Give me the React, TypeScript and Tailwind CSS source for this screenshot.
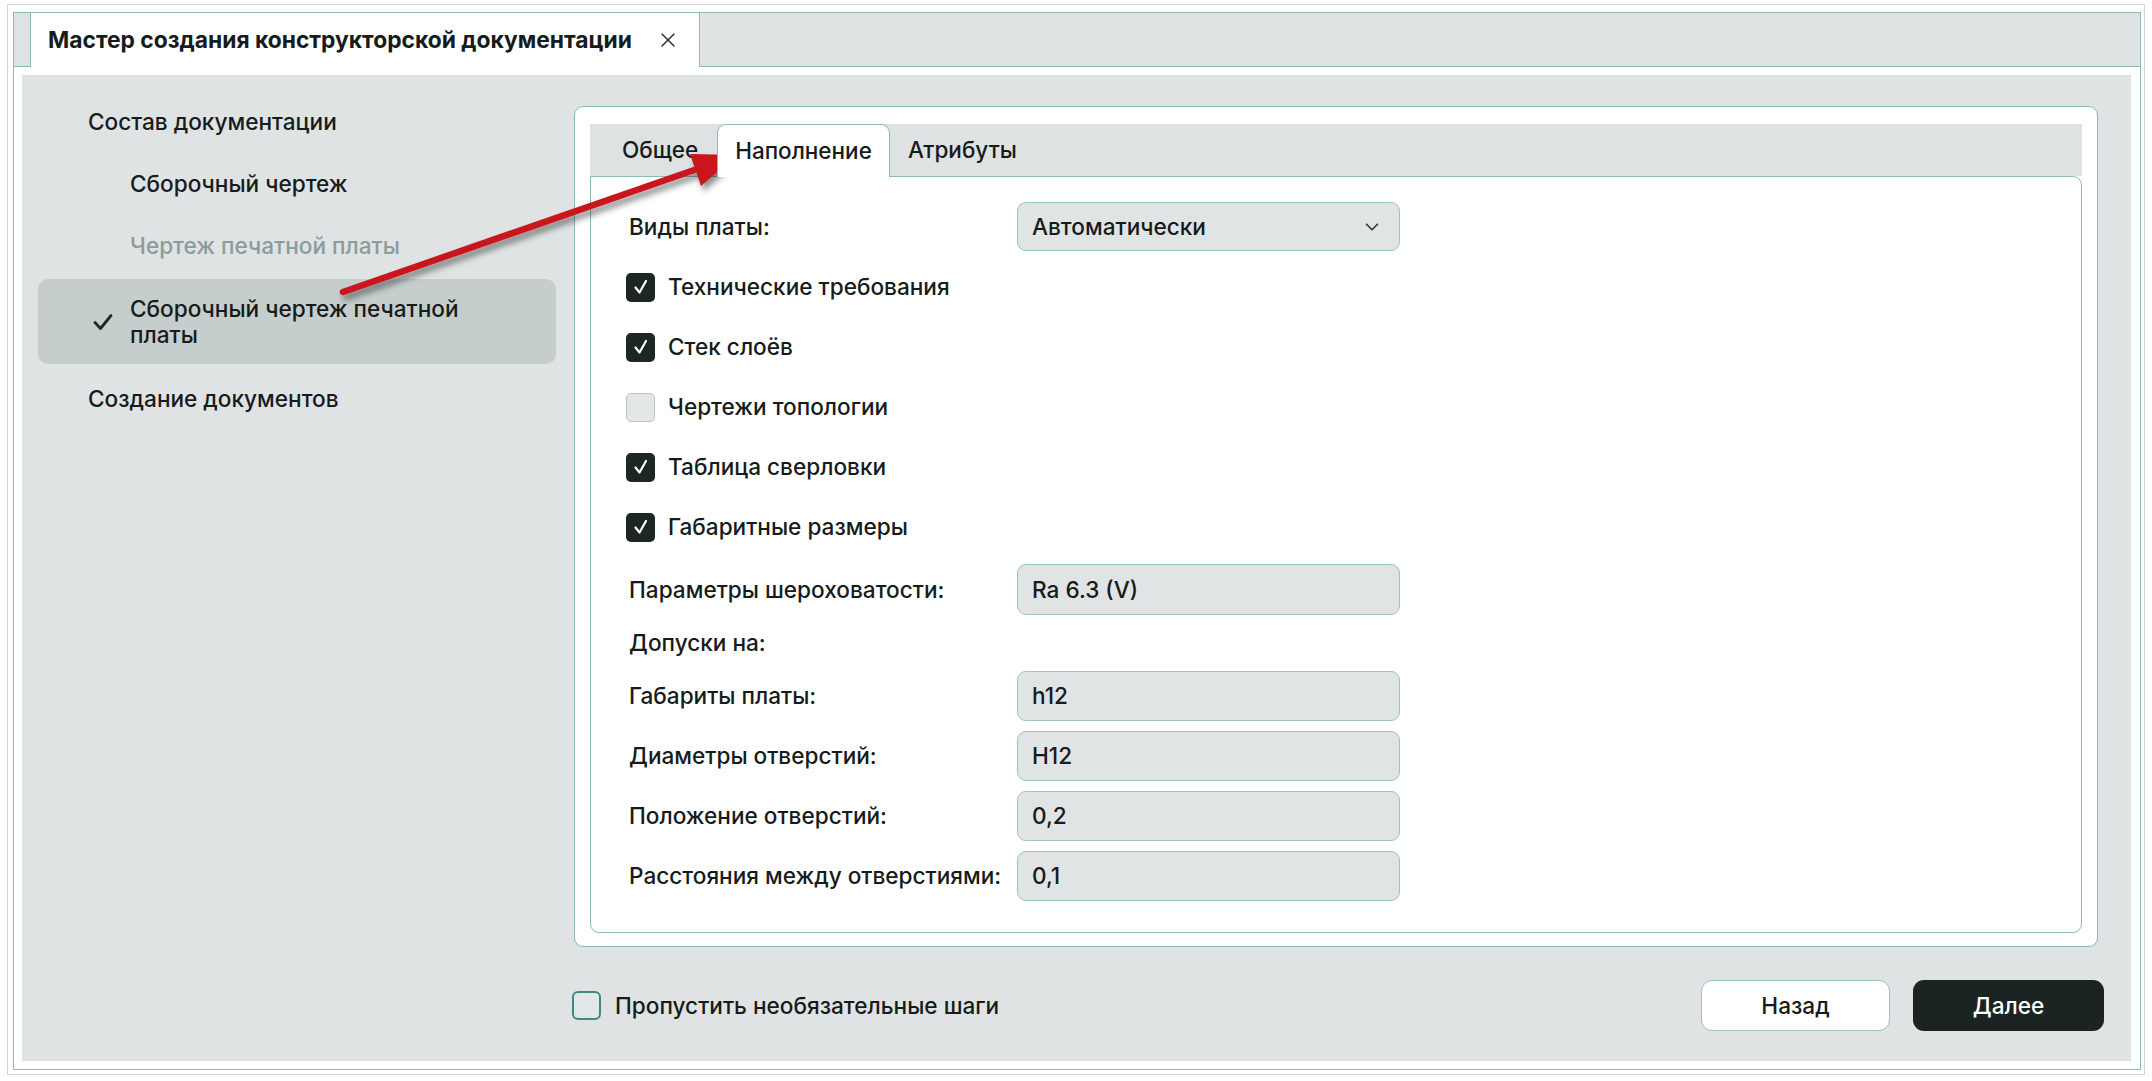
import React from "react";
import { X, ChevronDown } from "lucide-react";

function Check({ checked }: { checked: boolean }) {
  return checked ? (
    <div className="w-[29px] h-[29px] rounded-[5px] bg-[#1c2624] flex items-center justify-center shrink-0">
      <svg width="20" height="20" viewBox="0 0 20 20">
        <path d="M4.5 10.5 L8.5 15.5 L15 4" stroke="white" strokeWidth="2.2" fill="none" strokeLinecap="round" strokeLinejoin="round" />
      </svg>
    </div>
  ) : (
    <div className="w-[29px] h-[29px] rounded-[5px] bg-[#e4e7e7] border border-[#b9c5c4] shrink-0" />
  );
}

function CheckRow({ checked, label }: { checked: boolean; label: string }) {
  return (
    <div className="h-[60px] flex items-center ml-[-3px]">
      <Check checked={checked} />
      <span className="ml-[13px]">{label}</span>
    </div>
  );
}

function Field({ label, value }: { label: string; value: string }) {
  return (
    <div className="h-[50px] flex items-center">
      <div className="w-[388px]">{label}</div>
      <div className="w-[383px] h-full rounded-[9px] bg-[#e1e4e4] border-[1.5px] border-[#9cc3be] pl-[14px] flex items-center">
        {value}
      </div>
    </div>
  );
}

export default function App() {
  return (
    <div className="relative w-[2152px] h-[1081px] bg-white text-[#161b1b] [font-family:Inter,'Noto_Sans',sans-serif] overflow-hidden">
      {/* outer frame */}
      <div className="absolute left-[7px] top-[4px] w-[2138px] h-[1071px] border border-[#d2d5d5] pt-[7px] pl-[5px] pr-[3px] pb-[4px]">
        <div className="w-full h-full border border-[#8dbab5] flex flex-col">
          {/* tab strip */}
          <div className="h-[54px] bg-[#dee2e2] border-b border-[#8dbab5] flex shrink-0">
            <div className="w-[16px]" />
            <div className="h-[54px] -mb-[1px] bg-white border-x border-[#8dbab5] flex items-center pl-[17px] pr-[19px]">
              <span className="text-[22.8px] font-bold">Мастер создания конструкторской документации</span>
              <X className="ml-[24px] text-[#333]" size={24} strokeWidth={1.5} />
            </div>
          </div>
          {/* content */}
          <div className="flex-1 p-[8px] pr-[9px]">
            <div className="w-full h-full bg-[#dfe3e3] flex flex-col">
              <div className="flex items-start">
                {/* nav */}
                <div className="ml-[16px] w-[518px] pt-[16px] text-[22.6px] font-medium">
                  <div className="h-[62px] flex items-center pl-[50px]">Состав документации</div>
                  <div className="h-[62px] flex items-center pl-[92px]">Сборочный чертеж</div>
                  <div className="h-[62px] flex items-center pl-[92px] text-[#8a9c9b]">Чертеж печатной платы</div>
                  <div className="mt-[2px] h-[85px] rounded-[10px] bg-[#c6cdcd] flex items-center relative pl-[92px] leading-[26px]">
                    <svg className="absolute left-[55px] top-[34px]" width="20" height="18" viewBox="0 0 20 18">
                      <path d="M2 9.5 L7.5 15.5 L18 2.5" stroke="#1c2a28" strokeWidth="2.8" fill="none" strokeLinecap="round" strokeLinejoin="round" />
                    </svg>
                    <div>
                      Сборочный чертеж печатной
                      <br />
                      платы
                    </div>
                  </div>
                  <div className="mt-[4px] h-[62px] flex items-center pl-[50px]">Создание документов</div>
                </div>
                {/* panel */}
                <div className="ml-[18px] mt-[31px] w-[1524px] h-[841px] bg-white border border-[#8dbab5] rounded-[9px] pt-[17px] px-[15px] pb-[13px] flex flex-col">
                  <div className="h-[52px] bg-[#dee2e2] flex items-end shrink-0 text-[22.5px] font-medium">
                    <div className="ml-[15px] px-[17px] h-[52px] flex items-center">Общее</div>
                    <div className="ml-[2px] px-[17px] h-[53px] -mb-[1px] bg-white border border-b-0 border-[#8dbab5] rounded-t-[9px] flex items-center relative z-10">
                      Наполнение
                    </div>
                    <div className="px-[18px] h-[52px] flex items-center">Атрибуты</div>
                  </div>
                  <div className="flex-1 border border-[#8dbab5] rounded-b-[9px] rounded-tr-[9px] pl-[38px] pt-[25px] text-[22.6px] font-medium">
                    <div className="h-[49px] flex items-center">
                      <div className="w-[388px]">Виды платы:</div>
                      <div className="w-[383px] h-full rounded-[9px] bg-[#e1e4e4] border-[1.5px] border-[#9cc3be] pl-[14px] pr-[16px] flex items-center justify-between">
                        <span>Автоматически</span>
                        <ChevronDown size={22} strokeWidth={1.8} className="text-[#333]" />
                      </div>
                    </div>
                    <div className="mt-[6px]">
                      <CheckRow checked label="Технические требования" />
                      <CheckRow checked label="Стек слоёв" />
                      <CheckRow checked={false} label="Чертежи топологии" />
                      <CheckRow checked label="Таблица сверловки" />
                      <CheckRow checked label="Габаритные размеры" />
                    </div>
                    <div className="mt-[7px] h-[51px] flex items-center">
                      <div className="w-[388px]">Параметры шероховатости:</div>
                      <div className="w-[383px] h-full rounded-[9px] bg-[#e1e4e4] border-[1.5px] border-[#9cc3be] pl-[14px] flex items-center">
                        Ra 6.3 (V)
                      </div>
                    </div>
                    <div className="h-[56px] flex items-center">Допуски на:</div>
                    <div className="flex flex-col gap-[10px]">
                      <Field label="Габариты платы:" value="h12" />
                      <Field label="Диаметры отверстий:" value="H12" />
                      <Field label="Положение отверстий:" value="0,2" />
                      <Field label="Расстояния между отверстиями:" value="0,1" />
                    </div>
                  </div>
                </div>
              </div>
              {/* bottom row */}
              <div className="mt-[33px] h-[51px] flex items-center pl-[550px] pr-[27px] text-[22.6px] font-medium">
                <div className="w-[29px] h-[29px] rounded-[6px] border-[2.5px] border-[#3f8a80] bg-[#e2e6e6]" />
                <span className="ml-[14px]">Пропустить необязательные шаги</span>
                <div className="flex-1" />
                <div className="w-[189px] h-[51px] rounded-[11px] bg-white border-[1.5px] border-[#9cc3be] flex items-center justify-center">
                  Назад
                </div>
                <div className="ml-[23px] w-[191px] h-[51px] rounded-[11px] bg-[#1b2422] text-white flex items-center justify-center">
                  Далее
                </div>
              </div>
            </div>
          </div>
        </div>
      </div>
      {/* red arrow overlay */}
      <svg className="absolute left-0 top-0 pointer-events-none" width="2152" height="1081">
        <defs>
          <filter id="sh" x="-20%" y="-20%" width="140%" height="140%">
            <feDropShadow dx="3" dy="5" stdDeviation="3" floodColor="#000" floodOpacity="0.45" />
          </filter>
        </defs>
        <g filter="url(#sh)">
          <line x1="343" y1="292" x2="700" y2="168" stroke="#c8161d" strokeWidth="6.5" strokeLinecap="round" />
          <polygon points="737,155 701,186 690,154" fill="#c8161d" />
        </g>
      </svg>
    </div>
  );
}
